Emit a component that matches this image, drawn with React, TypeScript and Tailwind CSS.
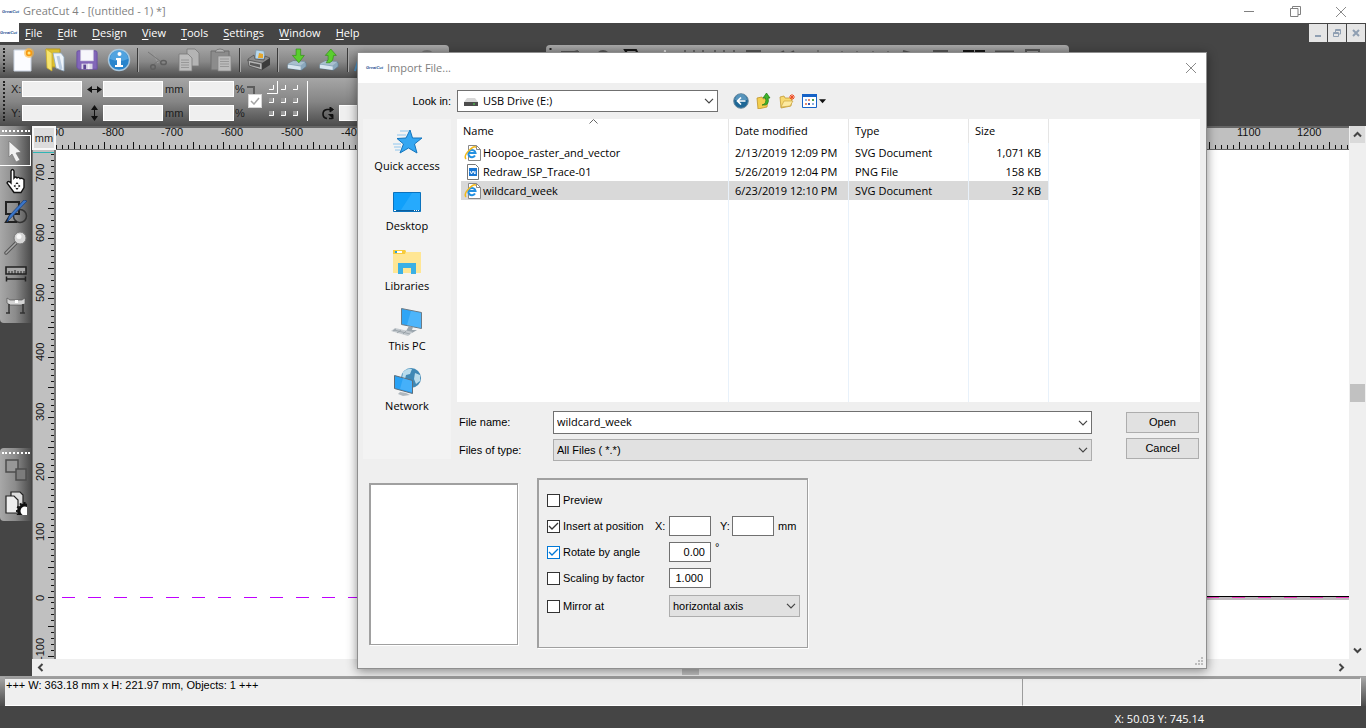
import { useState, type ReactNode } from 'react';

const MENU = ['File', 'Edit', 'Design', 'View', 'Tools', 'Settings', 'Window', 'Help'];

const FILES = [
  { name: 'Hoopoe_raster_and_vector', date: '2/13/2019 12:09 PM', type: 'SVG Document', size: '1,071 KB', kind: 'svg' },
  { name: 'Redraw_ISP_Trace-01', date: '5/26/2019 12:04 PM', type: 'PNG File', size: '158 KB', kind: 'png' },
  { name: 'wildcard_week', date: '6/23/2019 12:10 PM', type: 'SVG Document', size: '32 KB', kind: 'svg' },
];

// Ruler scale: 100 mm on screen and where the origin sits
const PX_PER_100 = 59.78;
const H_ORIGIN = 526.8;
const V_ORIGIN = 447.5;

/* ---------- small shared pieces ---------- */

function Logo() {
  return (
    <span className="w-4 shrink-0 text-center font-['Liberation_Sans',sans-serif] text-[4px] leading-none font-bold whitespace-nowrap text-[#1d4f91] italic">
      GreatCut
    </span>
  );
}

function Chevron() {
  return (
    <svg width="10" height="6" viewBox="0 0 10 6" className="pointer-events-none mr-[3px] self-center justify-self-end [grid-area:1/1]">
      <path d="M1 .8l4 4 4-4" fill="none" stroke="#444" strokeWidth="1.2" />
    </svg>
  );
}

function CloseX() {
  return (
    <svg width="12" height="12" viewBox="0 0 12 12">
      <path d="M1 1l10 10M11 1L1 11" stroke="#8a8a8a" />
    </svg>
  );
}

function Separator() {
  return (
    <span className="flex w-1.5 justify-center">
      <span className="h-6 w-0.5 border-r border-[#a8a8a8] bg-[#3a3a3a]" />
    </span>
  );
}

function ToolButton({ label, children }: { label: string; children: ReactNode }) {
  return (
    <button type="button" aria-label={label} className="flex h-7 w-8 items-center justify-center">
      {children}
    </button>
  );
}

/* ---------- toolbar icons ---------- */

function NewIcon() {
  return (
    <svg width="24" height="24" viewBox="0 0 24 24">
      <path d="M3 2h17v21H3z" fill="#fbfcff" stroke="#c9d3e2" />
      <circle cx="18" cy="5" r="5" fill="#ffb52e" opacity=".55" />
      <circle cx="18" cy="5" r="3.2" fill="#f79a12" />
      <circle cx="18" cy="5" r="1.5" fill="#ffe98a" />
    </svg>
  );
}

function OpenIcon() {
  return (
    <svg width="24" height="24" viewBox="0 0 24 24">
      <path d="M3 1h14v18H5z" fill="#dcbf2e" stroke="#b3951d" />
      <path d="M3 1l6 4v18l-5-3z" fill="#f6e46d" stroke="#c9ab28" strokeWidth=".7" />
      <path d="M10 5l8 0 3 4v14l-8-3z" fill="#eef4fa" stroke="#8fa9c2" strokeWidth=".8" />
      <path d="M15 8l3 13" stroke="#b9cbe0" strokeWidth="3" />
    </svg>
  );
}

function SaveIcon() {
  return (
    <svg width="22" height="22" viewBox="0 0 24 24">
      <path d="M1 3.500q0-1.500 1.500-1.500H21q2 0 2 2V22H3l-2-2z" fill="#8266b8" stroke="#6a4fa3" />
      <path d="M5 1h14v12H5z" fill="#f7f7fb" stroke="#c8c2da" strokeWidth=".6" />
      <path d="M6 16h12v6H6z" fill="#dcd8e8" />
      <path d="M8 17h3v5H8z" fill="#5c4494" />
      <path d="M14 16v6" stroke="#fff" />
    </svg>
  );
}

function InfoIcon() {
  return (
    <svg width="24" height="24" viewBox="0 0 24 24">
      <circle cx="12" cy="12" r="10.500" fill="#2784cc" stroke="#a9c7dd" strokeWidth="1.400" />
      <path d="M3 11a9 9 0 0 1 18 0q-9 4-18 0z" fill="#62b0e8" opacity=".7" />
      <circle cx="12.500" cy="6" r="2" fill="#fff" />
      <path d="M9 10h5v7h2v2H8v-2h2v-5H9z" fill="#fff" />
    </svg>
  );
}

function CutIcon() {
  return (
    <svg width="22" height="24" viewBox="0 0 22 24" fill="none" stroke="#5f5f5f">
      <path d="M6 2l6 13" stroke="#9a9a9a" strokeWidth="1.600" />
      <path d="M2 4l12 9M12 13l-5 4" stroke="#777" />
      <circle cx="7" cy="19" r="2.300" strokeWidth="1.500" />
      <ellipse cx="17.500" cy="14.500" rx="2.800" ry="2.100" strokeWidth="1.500" />
    </svg>
  );
}

function CopyIcon() {
  return (
    <svg width="24" height="24" viewBox="0 0 24 24" stroke="#7a7a7a" strokeWidth=".8">
      <path d="M10 1h8l4 4v13H10z" fill="#b4b4b4" />
      <path d="M2 6h9l4 4v13H2z" fill="#bdbdbd" />
      <path d="M4 12h8M4 14.500h8M4 17h8M4 19.500h8" stroke="#8e8e8e" />
    </svg>
  );
}

function PasteIcon() {
  return (
    <svg width="24" height="24" viewBox="0 0 24 24">
      <path d="M2 3h18v19H2z" fill="#8c8c8c" stroke="#6e6e6e" />
      <path d="M6 4q1-3 5-3t5 3z" fill="#b5b5b5" stroke="#666" strokeWidth=".7" />
      <path d="M9 8h13v15H9z" fill="#bcbcbc" stroke="#858585" strokeWidth=".7" />
      <path d="M11 11h9M11 13.500h9M11 16h9M11 18.500h9" stroke="#989898" />
    </svg>
  );
}

function PrintIcon() {
  return (
    <svg width="24" height="22" viewBox="0 0 24 22">
      <path d="M9 1l8 1 1 8H8z" fill="#b8d8ee" stroke="#7a96a8" strokeWidth=".7" />
      <path d="M12 4l4 1v4h-5z" fill="#e5a72e" />
      <path d="M1 10l6-4 1 4 9 1 1-4 5 2-7 6L1 12z" fill="#8b8b8b" stroke="#444" strokeWidth=".6" />
      <path d="M1 11l14 3v7L2 17z" fill="#b5b5b5" stroke="#444" strokeWidth=".7" />
      <path d="M3 13.500l10 2v3L3 16z" fill="#5a5a5a" />
      <path d="M15 14l8-5v7l-8 5z" fill="#3c3c3c" />
    </svg>
  );
}

function TransferIcon({ up }: { up?: boolean }) {
  return (
    <svg width="22" height="24" viewBox="0 0 24 24">
      <path d="M2 17l6-4 13 1 1 2v3l-5 4-15-2z" fill="#8ba8bd" stroke="#5d7b92" strokeWidth=".7" />
      <path d="M2 16l6-3 13 1-5 4z" fill="#a9bfce" />
      <path d="M2 17l14 2v4L2 21z" fill="#d7e5ef" />
      {up ? (
        <path d="M14 0l6 7h-3q0 6-4 8H9q3-3 2-8H8z" fill="#5ace2e" stroke="#2f8a12" strokeWidth=".7" />
      ) : (
        <path d="M11 0h5v7h4l-6 8-7-8h4z" fill="#5ace2e" stroke="#2f8a12" strokeWidth=".7" />
      )}
    </svg>
  );
}

/* ---------- window chrome ---------- */

function TitleBar() {
  return (
    <header className="flex h-[23px] items-center bg-white pr-0.5 pl-0.5">
      <Logo />
      <h1 className="ml-[5px] flex-1 font-['Open_Sans',sans-serif] text-[11px] text-[#808080]">GreatCut 4 - [(untitled - 1) *]</h1>
      <button type="button" aria-label="Minimize" className="flex w-[46px] justify-center">
        <svg width="10" height="10" viewBox="0 0 10 10"><path d="M0 4.500h10" stroke="#808080" /></svg>
      </button>
      <button type="button" aria-label="Restore" className="flex w-[46px] justify-center">
        <svg width="11" height="11" viewBox="0 0 11 11" fill="none" stroke="#808080">
          <path d="M.5 2.500h7.500v8H.5zM2.500 2.500v-2h8v8H8" />
        </svg>
      </button>
      <button type="button" aria-label="Close" className="flex w-[46px] justify-center"><CloseX /></button>
    </header>
  );
}

function MenuBar() {
  return (
    <nav className="flex h-[22px] items-start">
      <span className="flex h-[19px] w-[19px] items-center overflow-hidden bg-white"><Logo /></span>
      <ul className="ml-1.5 flex h-5 flex-1 items-center gap-[15px] font-['Open_Sans',sans-serif] text-[11px] text-white">
        {MENU.map((item) => (
          <li key={item}>
            <button type="button"><u className="underline-offset-2">{item[0]}</u>{item.slice(1)}</button>
          </li>
        ))}
      </ul>
      <div className="flex gap-px pt-px pr-px">
        <button type="button" aria-label="Minimize document" className="flex h-[18px] w-[18px] items-center justify-center bg-[#e5e5e5]">
          <svg width="8" height="8" viewBox="0 0 8 8"><path d="M1 7h6" stroke="#8f9fb2" strokeWidth="2" /></svg>
        </button>
        <button type="button" aria-label="Restore document" className="flex h-[18px] w-[18px] items-center justify-center bg-[#e5e5e5]">
          <svg width="8" height="8" viewBox="0 0 8 8" fill="none" stroke="#8f9fb2">
            <path d="M.5 3.500h5v4h-5zM.5 4.500h5M2.500 3V.5h5v4.500H6M2.500 1.500h5" />
          </svg>
        </button>
        <button type="button" aria-label="Close document" className="flex h-[18px] w-[18px] items-center justify-center bg-[#e5e5e5]">
          <svg width="8" height="8" viewBox="0 0 8 8"><path d="M1 1l6 6M7 1L1 7" stroke="#8f9fb2" strokeWidth="2" /></svg>
        </button>
      </div>
    </nav>
  );
}

function MainToolbar() {
  return (
    <div className="flex h-[33px] items-start">
      <div className="flex h-[33px] w-[449px] shrink-0 items-start rounded-tr-sm bg-linear-to-b from-[#a8a8a8] via-[#888] to-[#4c4c4c] pt-px pl-[3px]">
        <span className="mt-0.5 mr-0.5 h-6 border-l-2 border-dotted border-[#222]" />
        <div className="flex h-7 items-center">
          <ToolButton label="New"><NewIcon /></ToolButton>
          <ToolButton label="Open"><OpenIcon /></ToolButton>
          <ToolButton label="Save"><SaveIcon /></ToolButton>
          <ToolButton label="Info"><InfoIcon /></ToolButton>
          <Separator />
          <ToolButton label="Cut"><CutIcon /></ToolButton>
          <ToolButton label="Copy"><CopyIcon /></ToolButton>
          <ToolButton label="Paste"><PasteIcon /></ToolButton>
          <Separator />
          <ToolButton label="Print"><PrintIcon /></ToolButton>
          <Separator />
          <ToolButton label="Import"><TransferIcon /></ToolButton>
          <ToolButton label="Export"><TransferIcon up /></ToolButton>
          <Separator />
          <svg width="90" height="24" viewBox="0 0 90 24" fill="none">
            <path d="M4 23L9 6h8" stroke="#4f95c8" strokeWidth="2" />
            <circle cx="17" cy="10" r="5" fill="#4b83ad" />
            <circle cx="76" cy="10" r="7" stroke="#777" strokeWidth="2" />
          </svg>
        </div>
      </div>
      <div className="ml-[97px] h-[33px] w-[523px] rounded-t-sm bg-linear-to-b from-[#a8a8a8] to-[#555]">
        <svg width="523" height="24" viewBox="0 0 523 24" fill="none" stroke="#555" strokeWidth="2">
          <path d="M4.500 3v2M4.500 7v2" stroke="#222" />
          <path d="M15 7h18M18 10l14-4" />
          <circle cx="57" cy="12" r="6" />
          <path d="M79 5h11l4 8H84z" stroke="#161616" />
          <path d="M119 5l2 7h-5z" stroke="#e8e8e8" strokeWidth="1" />
          <path d="M139 5v9M148 5v9M157 5v9M169 5v9M178 5v9M188 5v9" strokeWidth="1.500" />
          <path d="M201 6h13v8h-13zM233 9l5-3M243 9l5-3" />
          <path d="M272 5v3M296 6v8M311 6v8M327 6v8M342 6v8" strokeWidth="1" />
          <path d="M357 6l18 5M388 6h13v8h-13z" />
          <path d="M418 6h9v8h-9zM430 6h8v8h-8z" stroke="#161616" />
          <path d="M449 7h19" strokeWidth="3" />
          <path d="M480 5h13v9h-13z" />
        </svg>
      </div>
    </div>
  );
}

function CoordField({ label, wide }: { label: string; wide?: boolean }) {
  return (
    <input
      type="text"
      aria-label={label}
      className={`h-4 border border-white bg-[#efefef] px-1 text-[11px] ${wide ? 'w-[60px]' : 'w-[45px]'}`}
    />
  );
}

function CoordBar() {
  return (
    <div className="flex h-12 w-[449px] items-start bg-linear-to-b from-[#a6a6a6] via-[#858585] to-[#4c4c4c] pt-[3px] pl-[3px] font-['Liberation_Sans',sans-serif] text-[11px] text-[#1c1c1c]">
      <span className="h-10 border-l-2 border-dotted border-[#222]" />
      <div className="ml-1.5 flex flex-col gap-2">
        <div className="flex h-4 items-center">
          <span className="w-[11px]">X:</span>
          <CoordField label="X position" wide />
          <svg width="21" height="9" viewBox="0 0 21 9"><path d="M5 4.500l5-3.500v3h5V1l5 3.500L15 8V5h-5v3z" fill="#111" /></svg>
          <CoordField label="Width" wide />
          <span className="w-[26px] pl-0.5">mm</span>
          <CoordField label="Width percent" />
          <span className="pl-px">%</span>
        </div>
        <div className="flex h-4 items-center">
          <span className="w-[11px]">Y:</span>
          <CoordField label="Y position" wide />
          <svg width="21" height="16" viewBox="0 0 21 16"><path d="M12.500 0L16 5h-3v6h3l-3.500 5L9 11h3V5H9z" fill="#111" /></svg>
          <CoordField label="Height" wide />
          <span className="w-[26px] pl-0.5">mm</span>
          <CoordField label="Height percent" />
          <span className="pl-px">%</span>
        </div>
      </div>
      <div className="ml-0.5 flex w-4 flex-col items-end pt-[5px]">
        <span className="mr-2 h-2 w-2 border-t-2 border-r-2 border-[#5c5c5c]" />
        <label className="mr-px grid place-items-center">
          <input type="checkbox" aria-label="Keep proportions" defaultChecked className="h-3.5 w-3.5 appearance-none border border-[#d5d5d5] bg-white [grid-area:1/1]" />
          <svg width="10" height="8" viewBox="0 0 10 8" className="pointer-events-none [grid-area:1/1]"><path d="M1 4l3 3 5-6" fill="none" stroke="#a5a5a5" strokeWidth="1.500" /></svg>
        </label>
      </div>
      <svg width="34" height="40" viewBox="0 0 34 40" className="ml-1">
        <path d="M10.500 0v12.500H0" fill="none" stroke="#fff" />
        {[4, 17, 30].map((y) =>
          [2, 14, 26].map((x) => (
            <g key={`${x}-${y}`}>
              <path d={`M${x} ${y}h5v5h-5z`} fill="#9a9a9a" />
              <path d={`M${x} ${y + 4.5}h4.500v-4.500`} fill="none" stroke="#fff" />
            </g>
          )),
        )}
      </svg>
      <span className="ml-1.5 h-10 w-px bg-white" />
      <div className="ml-3.5 flex items-center gap-1 pt-6">
        <svg width="13" height="13" viewBox="0 0 13 13" fill="none" stroke="#111" strokeWidth="1.600">
          <path d="M5 11.500Q1 11 1 7t4-4.500h4M7 11.500h3.500" />
          <path d="M8 0l3.500 2.500L8 5zM6.500 7.500H11V12" fill="#111" strokeWidth="1" />
        </svg>
        <CoordField label="Rotation" wide />
      </div>
    </div>
  );
}

/* ---------- rulers and canvas ---------- */

function HorizontalRuler() {
  const ticks = Array.from({ length: 230 }, (_, i) => i - 90);
  const labels = Array.from({ length: 22 }, (_, i) => i - 9);
  return (
    <svg className="h-6 min-w-0 flex-1 border-t-2 border-b border-[#666] bg-[#c0c0c0] font-['Liberation_Sans',sans-serif] text-[11px]" width="100%" height="24">
      {ticks.map((t) => {
        const x = Math.round(H_ORIGIN + (t * PX_PER_100) / 10);
        return <path key={t} d={`M${x - 0.5} 21v${t % 5 === 0 ? -7 : -4}`} stroke="#111" />;
      })}
      {labels.map((n) => (
        <text key={n} x={Math.round(H_ORIGIN + n * PX_PER_100) - 3} y="8" fill="#111">{n * 100}</text>
      ))}
    </svg>
  );
}

function VerticalRuler() {
  const ticks = Array.from({ length: 90 }, (_, i) => i - 11);
  const labels = [7, 6, 5, 4, 3, 2, 1, 0, -1];
  return (
    <svg className="w-6 flex-1 border-r-2 border-l border-[#777] bg-[#c0c0c0] font-['Liberation_Sans',sans-serif] text-[11px]" width="24" height="508">
      <path d="M0 2.500h22" stroke="#2fb5b5" />
      {ticks.map((t) => {
        const y = Math.round(V_ORIGIN - (t * PX_PER_100) / 10);
        return y > 4 && <path key={t} d={`M22 ${y - 0.5}h${t % 5 === 0 ? -7 : -4}`} stroke="#111" />;
      })}
      {labels.map((n) => {
        const y = Math.round(V_ORIGIN - n * PX_PER_100) + 3;
        return (
          <text key={n} x="11" y={y} transform={`rotate(-90 11 ${y})`} fill="#111">{n * 100}</text>
        );
      })}
    </svg>
  );
}

function Canvas() {
  return (
    <svg className="min-h-[508px] min-w-0 flex-1 bg-white" width="100%" height="100%">
      <path d="M1110 446.500h2000" stroke="#000" />
      <path d="M1110 448.500h2000" stroke="#bfb8bd" strokeWidth="3" />
      <path d="M6 447.500h1104" stroke="#c000ff" strokeDasharray="13 13" />
      <path d="M1150 447.500h2000" stroke="#f03cc0" strokeDasharray="13 13" />
    </svg>
  );
}

function ToolPalette() {
  return (
    <aside className="flex w-8 shrink-0 flex-col gap-[125px]">
      <div className="flex w-[31px] flex-col items-center rounded-bl-sm bg-linear-to-r from-[#a8a8a8] via-[#8b8b8b] to-[#4c4c4c] pt-1">
        <span className="mb-[3px] w-7 border-t-2 border-dotted border-white" />
        <button type="button" aria-label="Select" className="flex h-[31px] w-full items-center justify-center border border-l-0 border-white">
          <svg width="16" height="22" viewBox="0 0 16 22"><path d="M2 1l12 11-5 1 4 7-4 2-4-8-3 3z" fill="#f2f2f2" stroke="#777" strokeWidth=".7" /></svg>
        </button>
        <button type="button" aria-label="Pan" className="flex h-[30px] w-full items-center justify-center">
          <svg width="22" height="26" viewBox="0 0 22 26">
            <path d="M6 15V3q1.500-3 3 0v7q1.500-2 3 0 1.500-1.500 3 .5 2-1 4 1v8l-3 5H9L2 15q1-3 4 0z" fill="#fff" stroke="#111" strokeWidth="1.400" />
            <path d="M12 14l-1.500 2h3zM12 22l-1.500-2h3zM8.500 18l2-1.500v3zM15.500 18l-2-1.500v3z" fill="#111" />
          </svg>
        </button>
        <button type="button" aria-label="Draw shapes" className="flex h-[31px] w-full items-center justify-center">
          <svg width="24" height="24" viewBox="0 0 24 24" fill="none">
            <path d="M2 2h13v12H2z" stroke="#222" strokeWidth="2" />
            <circle cx="16" cy="16" r="6.500" stroke="#333" strokeWidth="1.500" />
            <path d="M7 14l-5 8h11" stroke="#222" strokeWidth="2" />
            <path d="M23 1L3 22l2-6L20 0z" fill="#3b76c9" stroke="#173c78" strokeWidth=".7" />
          </svg>
        </button>
        <button type="button" aria-label="Zoom" className="flex h-[31px] w-full items-center justify-center">
          <svg width="24" height="24" viewBox="0 0 24 24">
            <path d="M12 12L2 22" stroke="#555" strokeWidth="3.500" strokeLinecap="round" />
            <path d="M12 12L2 22" stroke="#aaa" strokeWidth="1.500" strokeLinecap="round" />
            <circle cx="16" cy="7" r="6" fill="#d6d6d6" stroke="#777" />
            <circle cx="15" cy="5.500" r="2.500" fill="#f8f8f8" />
          </svg>
        </button>
        <button type="button" aria-label="Measure" className="flex h-[31px] w-full items-center justify-center">
          <svg width="22" height="16" viewBox="0 0 22 16" fill="none" stroke="#222">
            <path d="M1 1h20v7H1z" fill="#a9a9a9" strokeWidth="1.600" />
            <path d="M4 8V5M7 8V5M10 8V4M13 8V5M16 8V5M19 8V5" />
            <path d="M1 13h20M1.500 10.500v5M20.500 10.500v5" strokeWidth="1.500" />
          </svg>
        </button>
        <button type="button" aria-label="Cut plotter" className="flex h-[34px] w-full items-center justify-center">
          <svg width="22" height="18" viewBox="0 0 22 18">
            <path d="M2 1l3 2h12l3-2v6l-4 1H5L2 6z" fill="#d5d5d5" stroke="#555" strokeWidth=".7" />
            <path d="M10 3h3v3h-3z" fill="#fff" />
            <path d="M4 7v9M1 16h4M18 7v9M15 16h5" stroke="#333" strokeWidth="1.500" fill="none" />
          </svg>
        </button>
      </div>
      <div className="flex w-[31px] flex-col items-center rounded-l-sm bg-linear-to-r from-[#a8a8a8] via-[#8b8b8b] to-[#4c4c4c] pt-1 pb-0.5">
        <span className="w-7 border-t-2 border-dotted border-white" />
        <button type="button" aria-label="Arrange" className="flex h-8 w-full items-center justify-center">
          <svg width="22" height="22" viewBox="0 0 22 22" stroke="#4d4d4d" strokeWidth="1.500">
            <path d="M1 1h12v12H1z" fill="#979797" />
            <path d="M11 10h10v11H11z" fill="#7c7c7c" />
          </svg>
        </button>
        <button type="button" aria-label="Job settings" className="flex h-[33px] w-full items-center justify-center">
          <svg width="22" height="24" viewBox="0 0 22 24">
            <path d="M6 1h9l3 3v15H6z" fill="#ddd" stroke="#222" strokeWidth="1.200" />
            <path d="M1 5h8l4 4v13H1z" fill="#eee" stroke="#222" strokeWidth="1.200" />
            <circle cx="20" cy="20" r="6" fill="#fff" stroke="#111" strokeWidth="3" />
            <circle cx="20" cy="20" r="8" fill="none" stroke="#111" strokeWidth="2" strokeDasharray="2 2" />
          </svg>
        </button>
      </div>
    </aside>
  );
}

function ScrollArrow({ label, d, className }: { label: string; d: string; className: string }) {
  return (
    <button type="button" aria-label={label} className={`flex shrink-0 items-center justify-center ${className}`}>
      <svg width="9" height="9" viewBox="0 0 9 9"><path d={d} fill="none" stroke="#444" strokeWidth="2" /></svg>
    </button>
  );
}

function Workspace() {
  return (
    <main className="flex flex-1">
      <ToolPalette />
      <div className="flex min-w-0 flex-1 flex-col">
        <div className="flex min-h-0 flex-1">
          <div className="flex min-w-0 flex-1 flex-col">
            <div className="flex h-6">
              <span className="flex h-6 w-6 shrink-0 items-center justify-center border-2 border-[#f8f8f8] bg-[#dcdcdc] font-['Liberation_Sans',sans-serif] text-[11px] text-[#1c1c1c]">
                mm
              </span>
              <HorizontalRuler />
            </div>
            <div className="flex min-h-0 flex-1">
              <div className="flex w-6 shrink-0 flex-col"><VerticalRuler /></div>
              <Canvas />
            </div>
          </div>
          <div className="flex w-[17px] shrink-0 flex-col items-center justify-between bg-[#efefef]">
            <ScrollArrow label="Scroll up" d="M1 6.500L4.500 3 8 6.500" className="h-[17px] w-[15px] bg-[#dadada]" />
            <span className="h-[18px] w-[15px] bg-[#c1c1c1]" />
            <ScrollArrow label="Scroll down" d="M1 2.500L4.500 6 8 2.500" className="h-[17px] w-[15px]" />
          </div>
        </div>
        <div className="flex h-[17px] items-center justify-between bg-[#efefef] pr-[17px]">
          <ScrollArrow label="Scroll left" d="M6.500 1L3 4.500 6.500 8" className="h-[17px] w-4" />
          <span className="h-[15px] w-[17px] bg-[#c1c1c1]" />
          <ScrollArrow label="Scroll right" d="M2.500 1L6 4.500 2.500 8" className="h-[17px] w-4" />
        </div>
      </div>
    </main>
  );
}

function StatusBar() {
  return (
    <footer className="font-['Open_Sans',sans-serif] text-[11px]">
      <div className="flex h-[30px] border-t border-[#a0a0a0] bg-linear-to-b from-[#a8a8a8] to-[#4c4c4c] px-[5px] font-['Liberation_Sans',sans-serif] text-black">
        <p className="flex-1 border-t-2 border-b border-t-[#9c9c9c] border-b-white bg-[#efefef] pl-px leading-3">
          +++ W: 363.18 mm x H: 221.97 mm, Objects: 1 +++
        </p>
        <span className="w-[339px] border-t-2 border-r border-b border-l border-t-[#9c9c9c] border-r-white border-b-white border-l-[#9c9c9c] bg-[#efefef]" />
      </div>
      <p className="h-[22px] pt-1 pr-[162px] text-right leading-[18px] text-white">X: 50.03 Y: 745.14</p>
    </footer>
  );
}

/* ---------- import dialog ---------- */

function FileIcon({ kind }: { kind: string }) {
  if (kind === 'png') {
    return (
      <svg width="18" height="16" viewBox="0 0 18 16">
        <path d="M3.500.5h8l3 3v12h-11z" fill="#fff" stroke="#777" />
        <path d="M5 4h8v8H5z" fill="#1976d2" />
        <path d="M6 7l1.500 3L9 7l2 3V7" fill="none" stroke="#fff" />
      </svg>
    );
  }
  return (
    <svg width="18" height="16" viewBox="0 0 18 16">
      <path d="M4.500.5h8l4 4v11h-12z" fill="#fff" stroke="#888" />
      <path d="M12.500.5v4h4" fill="none" stroke="#888" />
      <path d="M11 10.500A3.600 3.600 0 1 1 11.500 8H5" fill="none" stroke="#2390e0" strokeWidth="2" />
      <path d="M2 14Q-.5 11 5 5.500T12 2.500" fill="none" stroke="#f2b91c" strokeWidth="1.500" />
    </svg>
  );
}

function PlaceIcon({ name }: { name: string }) {
  switch (name) {
    case 'Quick access':
      return (
        <svg width="32" height="32" viewBox="0 0 32 32">
          <path d="M19 4l2.500 8H31l-7.500 6 2.500 9-8.500-5-8.500 5 3.500-9L6 12.500l9-.5z" fill="#35a7f2" stroke="#1475bd" />
          <path d="M9 5h9M6 9h9M2 18h8M3 21h7M4 24h5" stroke="#8fc6ee" />
        </svg>
      );
    case 'Desktop':
      return (
        <svg width="32" height="32" viewBox="0 0 32 32">
          <path d="M2.500 6.500h27v19h-27z" fill="#10a0fb" stroke="#0b72bd" />
          <path d="M21 7h8v17H10z" fill="#35b1ff" opacity=".6" />
          <path d="M3 24.500h26" stroke="#0b5e9c" />
          <path d="M3 24.500h2M23 24.500h1M25 24.500h1M27 24.500h1" stroke="#fff" />
        </svg>
      );
    case 'Libraries':
      return (
        <svg width="32" height="32" viewBox="0 0 32 32">
          <path d="M2 5h12l1 1h15v21H2z" fill="#ffe694" />
          <path d="M2 4h12l1 1-1 3H2z" fill="#f7cc3c" />
          <path d="M4 5h2v2H4z" fill="#2a9fd8" />
          <path d="M6 5h5v2H6z" fill="#fff" />
          <path d="M7 17h18v11h-5v-6h-8v6H7z" fill="#3bb0e5" />
        </svg>
      );
    case 'This PC':
      return (
        <svg width="32" height="32" viewBox="0 0 32 32">
          <path d="M10.500 2.500l20 4v16l-20-4z" fill="#2fa5f5" stroke="#6d7a84" />
          <path d="M20 5l10 2v15l-14-3z" fill="#62bfff" opacity=".6" />
          <path d="M18 20l4 1-1 3 5 0-5 3-6-2z" fill="#9aa5ad" />
          <path d="M4 22l18 4-5 4L0 25z" fill="#c3c9ce" />
          <path d="M3 24l16 4M5 23l-3 2M10 24l-4 3M15 25l-3 3" stroke="#8d969d" strokeWidth=".7" />
        </svg>
      );
    default:
      return (
        <svg width="32" height="32" viewBox="0 0 32 32">
          <circle cx="20" cy="12" r="10" fill="#3f88b5" />
          <path d="M12 6q4-4 9-3l-2 5-4 1-1 4-3-1zM24 7l5 2 0 6-4 3-2-5z" fill="#b9dcec" />
          <path d="M3.500 9.500l18 5v13l-18-5z" fill="#29a2f5" stroke="#5d6d79" />
          <path d="M12 12l9 3v11l-12-3z" fill="#61beff" opacity=".5" />
          <path d="M9 26l6 1 4 2-7 1-5-2z" fill="#b0b8be" />
        </svg>
      );
  }
}

function PlacesBar() {
  const places = ['Quick access', 'Desktop', 'Libraries', 'This PC', 'Network'];
  return (
    <nav className="h-[340px] w-[88px] shrink-0 bg-[#f3f3f3] pt-[7px]">
      {places.map((p) => (
        <button key={p} type="button" className="flex h-[60px] w-full flex-col items-center font-['Open_Sans',sans-serif] text-[11px] leading-4 text-black">
          <PlaceIcon name={p} />
          {p}
        </button>
      ))}
    </nav>
  );
}

function LookInRow() {
  return (
    <div className="flex h-[22px] items-center">
      <label htmlFor="look-in" className="w-[98px] shrink-0 pr-1.5 text-right">Look in:</label>
      <div className="grid h-[22px] w-[261px] border border-[#707070] bg-white">
        <svg width="14" height="12" viewBox="0 0 14 12" className="ml-1.5 self-center [grid-area:1/1]">
          <path d="M3 3h8l3 4H0z" fill="#d8d8d8" />
          <path d="M0 7h14v4H0z" fill="#4c4c4c" />
          <path d="M9 9h2" stroke="#4be04b" />
        </svg>
        <select id="look-in" className="appearance-none bg-transparent pl-[25px] font-['Open_Sans',sans-serif] text-[11px] [grid-area:1/1]">
          <option>USB Drive (E:)</option>
        </select>
        <Chevron />
      </div>
      <button type="button" aria-label="Back" className="ml-[15px]">
        <svg width="16" height="16" viewBox="0 0 16 16">
          <circle cx="8" cy="8" r="7.300" fill="#1e6796" stroke="#6d8ba0" />
          <path d="M2 7a6 6 0 0 1 12 0z" fill="#6fa8cc" opacity=".7" />
          <path d="M12.500 8H5M8 4.500L4.500 8 8 11.500" fill="none" stroke="#fff" strokeWidth="1.700" />
        </svg>
      </button>
      <button type="button" aria-label="Up one level" className="ml-[7px]">
        <svg width="15" height="16" viewBox="0 0 15 16">
          <path d="M1 5l5-1 1 2 5-1-1 9-9 2z" fill="#f3cf4e" stroke="#bf932b" strokeWidth=".8" />
          <path d="M6 12q5-1 3.500-7H7l3.500-5L14 5h-2q2 8-6 7z" fill="#3fb52c" stroke="#1d7a14" strokeWidth=".7" />
        </svg>
      </button>
      <button type="button" aria-label="New folder" className="ml-2">
        <svg width="16" height="16" viewBox="0 0 16 16">
          <path d="M1 4l4-1 1 2h7l-1 8-10 2z" fill="#f8da71" stroke="#c39a35" strokeWidth=".8" />
          <path d="M2 14l3-6h9l-3 5z" fill="#fdeaa0" stroke="#c39a35" strokeWidth=".6" />
          <path d="M13 1v6M10 4h6M11 2l4 4M15 2l-4 4" stroke="#ef4b22" />
        </svg>
      </button>
      <button type="button" aria-label="View menu" className="ml-[7px] flex items-center gap-0.5">
        <svg width="15" height="14" viewBox="0 0 15 14">
          <path d="M.5.5h14v13H.5z" fill="#fff" stroke="#1663c7" />
          <path d="M0 0h15v3H0z" fill="#1663c7" />
          <path d="M3 5h2v2H3zM10 9h2v2h-2z" fill="#8fb0e0" />
          <path d="M6 5h2v2H6zM3 9h2v2H3z" fill="#e58a6f" />
          <path d="M10 5h2v2h-2z" fill="#4da04f" />
          <path d="M6 9h2v2H6z" fill="#3557b5" />
        </svg>
        <svg width="7" height="5" viewBox="0 0 8 5"><path d="M0 0h8L4 4.500z" fill="#111" /></svg>
      </button>
    </div>
  );
}

function FileList() {
  return (
    <div className="relative h-[283px] bg-white pl-1 font-['Open_Sans',sans-serif] text-[11px] text-black">
      <svg width="9" height="5" viewBox="0 0 9 5" className="absolute top-0 left-[132px]">
        <path d="M.5 4.500l4-4 4 4" fill="none" stroke="#666" />
      </svg>
      <table className="h-full w-[588px] table-fixed border-separate border-spacing-0">
        <colgroup>
          <col className="w-[268px]" />
          <col className="w-[120px]" />
          <col className="w-[120px]" />
          <col className="w-[80px]" />
        </colgroup>
        <thead>
          <tr className="h-6 text-left">
            <th className="border-r border-[#e5e5e5] p-0 pl-0.5 font-normal">Name</th>
            <th className="border-r border-[#e5e5e5] p-0 pl-1.5 font-normal">Date modified</th>
            <th className="border-r border-[#e5e5e5] p-0 pl-1.5 font-normal">Type</th>
            <th className="border-r border-[#e5e5e5] p-0 pl-1.5 font-normal">Size</th>
          </tr>
        </thead>
        <tbody>
          {FILES.map((f) => (
            <tr key={f.name} className={`h-[19px] leading-[18px] ${f.name === 'wildcard_week' ? 'bg-[#d9d9d9]' : ''}`}>
              <td className="border-r border-[#e8f1fa] p-0 pl-[3px]">
                <span className="flex items-center gap-px"><FileIcon kind={f.kind} />{f.name}</span>
              </td>
              <td className="border-r border-[#e8f1fa] p-0 pl-1.5 whitespace-nowrap">{f.date}</td>
              <td className="border-r border-[#e8f1fa] p-0 pl-1.5">{f.type}</td>
              <td className="border-r border-[#e8f1fa] p-0 pr-[7px] text-right">{f.size}</td>
            </tr>
          ))}
          <tr aria-hidden="true">
            <td className="border-r border-[#e8f1fa]" />
            <td className="border-r border-[#e8f1fa]" />
            <td className="border-r border-[#e8f1fa]" />
            <td className="border-r border-[#e8f1fa]" />
          </tr>
        </tbody>
      </table>
    </div>
  );
}

function Check({ label, defaultChecked, accent }: { label: string; defaultChecked?: boolean; accent?: boolean }) {
  const [checked, setChecked] = useState(!!defaultChecked);
  return (
    <label className="flex w-[106px] items-center gap-[3px] whitespace-nowrap">
      <span className="grid place-items-center">
        <input
          type="checkbox"
          checked={checked}
          onChange={(e) => setChecked(e.target.checked)}
          className={`h-[13px] w-[13px] appearance-none border bg-white [grid-area:1/1] ${accent ? 'border-[#0078d7]' : 'border-[#333]'}`}
        />
        {checked && (
          <svg width="11" height="9" viewBox="0 0 11 9" className="pointer-events-none [grid-area:1/1]">
            <path d="M1 4l3 3 6-6" fill="none" stroke={accent ? '#0078d7' : '#333'} strokeWidth="1.300" />
          </svg>
        )}
      </span>
      {label}
    </label>
  );
}

function ImportOptions() {
  return (
    <fieldset className="h-[170px] w-[271px] border border-t-2 border-l-2 border-[#a0a0a0] pt-[7px] pl-2 shadow-[1px_1px_0_#fff]">
      <div className="flex h-[26px] items-center"><Check label="Preview" /></div>
      <div className="flex h-[26px] items-center">
        <Check label="Insert at position" defaultChecked />
        <label htmlFor="pos-x" className="w-4 pl-0.5">X:</label>
        <input id="pos-x" type="text" className="h-5 w-[42px] border border-[#707070] bg-white px-1" />
        <label htmlFor="pos-y" className="w-[21px] pl-[9px]">Y:</label>
        <input id="pos-y" type="text" className="h-5 w-[42px] border border-[#707070] bg-white px-1" />
        <span className="pl-1">mm</span>
      </div>
      <div className="flex h-[26px] items-center">
        <Check label="Rotate by angle" defaultChecked accent />
        <input type="text" aria-label="Angle" defaultValue="0.00" className="ml-4 h-5 w-[42px] border border-[#707070] bg-white pr-[5px] text-right" />
        <span className="self-start pl-1">°</span>
      </div>
      <div className="flex h-[26px] items-center">
        <Check label="Scaling by factor" />
        <input type="text" aria-label="Factor" defaultValue="1.000" className="ml-4 h-5 w-[42px] border border-[#707070] bg-white pr-[7px] text-right" />
      </div>
      <div className="flex h-[30px] items-center">
        <Check label="Mirror at" />
        <div className="ml-4 grid h-[22px] w-[131px] border border-[#adadad] bg-[#e1e1e1]">
          <select aria-label="Mirror axis" className="appearance-none bg-transparent pl-[3px] [grid-area:1/1]">
            <option>horizontal axis</option>
          </select>
          <Chevron />
        </div>
      </div>
    </fieldset>
  );
}

function ImportDialog() {
  return (
    <div
      role="dialog"
      aria-label="Import File"
      className="absolute top-[52px] right-[159px] left-[357px] h-[617px] border border-[#8f8f8f] bg-[#efefef] font-['Liberation_Sans',sans-serif] text-[11px] text-black shadow-[0_2px_10px_rgba(0,0,0,0.45)]"
    >
      <div className="flex h-[30px] items-center bg-white pr-[9px] pl-2">
        <Logo />
        <h2 className="ml-[5px] flex-1 font-['Open_Sans',sans-serif] text-[11px] text-[#808080]">Import File...</h2>
        <button type="button" aria-label="Close dialog"><CloseX /></button>
      </div>
      <div className="flex flex-col gap-[7px] px-1.5 pt-[7px] pl-px">
        <LookInRow />
        <div className="flex gap-1.5 pl-1">
          <PlacesBar />
          <div className="min-w-0 flex-1">
            <FileList />
            <div className="flex pt-[9px] pr-px">
              <div className="flex flex-1 flex-col gap-[5px]">
                <div className="flex h-[23px] items-center">
                  <label htmlFor="file-name" className="w-24 pl-0.5">File name:</label>
                  <div className="grid h-[23px] flex-1 border border-[#707070] bg-white">
                    <input id="file-name" type="text" defaultValue="wildcard_week" className="bg-transparent pl-[3px] font-['Open_Sans',sans-serif] text-[11px] [grid-area:1/1]" />
                    <Chevron />
                  </div>
                </div>
                <div className="flex h-[22px] items-center">
                  <label htmlFor="file-type" className="w-24 pl-0.5">Files of type:</label>
                  <div className="grid h-[22px] flex-1 border border-[#adadad] bg-[#e1e1e1]">
                    <select id="file-type" className="appearance-none bg-transparent pl-[3px] [grid-area:1/1]">
                      <option>All Files ( *.*)</option>
                    </select>
                    <Chevron />
                  </div>
                </div>
              </div>
              <div className="ml-[34px] flex w-[73px] flex-col gap-[5px] pt-px">
                <button type="button" className="h-[21px] border border-[#adadad] bg-[#e1e1e1]">Open</button>
                <button type="button" className="h-[21px] border border-[#adadad] bg-[#e1e1e1]">Cancel</button>
              </div>
            </div>
          </div>
        </div>
      </div>
      <div className="mt-[17px] flex items-start gap-[19px] pl-[11px]">
        <div className="mt-[5px] h-[162px] w-[149px] border border-t-2 border-l-2 border-[#a0a0a0] bg-white shadow-[1px_1px_0_#fff]" />
        <ImportOptions />
      </div>
      <svg width="10" height="10" viewBox="0 0 10 10" className="absolute right-[2px] bottom-[2px]" fill="#bdbdbd">
        <path d="M7 1h2v2H7zM4 4h2v2H4zM7 4h2v2H7zM1 7h2v2H1zM4 7h2v2H4zM7 7h2v2H7z" />
      </svg>
    </div>
  );
}

export default function App() {
  return (
    <div className="relative flex min-h-screen flex-col overflow-hidden bg-[#454545]">
      <TitleBar />
      <MenuBar />
      <MainToolbar />
      <CoordBar />
      <Workspace />
      <StatusBar />
      <ImportDialog />
    </div>
  );
}
